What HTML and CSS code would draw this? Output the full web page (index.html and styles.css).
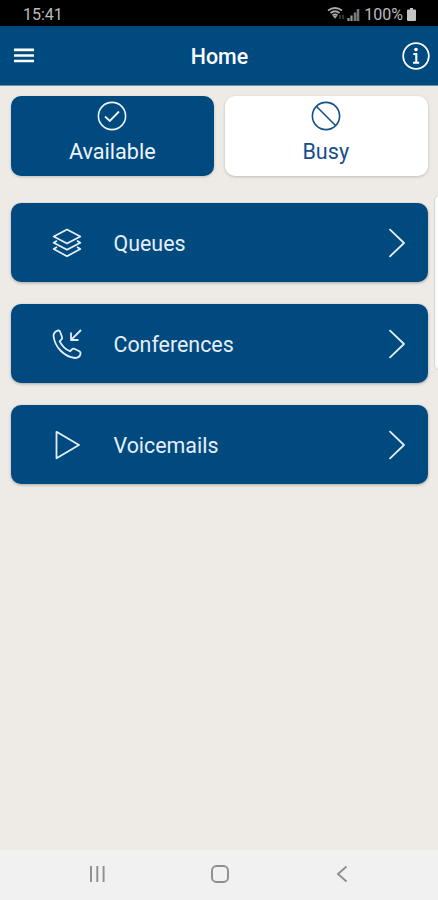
FILE: index.html
```html
<!DOCTYPE html>
<html lang="en">
<head>
    <meta charset="UTF-8">
    <meta name="viewport" content="width=device-width, initial-scale=1.0">
    <title>Home</title>
    <link rel="stylesheet" href="styles.css">
</head>
<body>
<div class="status-bar">
    <span class="time">15:41</span>
    <div class="status-icons">
        <svg class="wifi" width="18" height="14" viewBox="0 0 18 14">
            <path d="M1 3.500Q8-1.500 15 3.500M3.500 6Q8 2.500 12.500 6M5.500 8.300Q8 6.500 10.500 8.300" fill="none" stroke="#aaa" stroke-width="1.800"/>
            <path d="M5.500 8.500L8 11.800L10.500 8.500Z" fill="#aaa"/>
            <path d="M13 8v4M16 8v4" stroke="#444" stroke-width="1.500"/>
        </svg>
        <svg class="signal" width="13" height="13" viewBox="0 0 13 13">
            <path d="M1.500 10v3M4.500 7.500V13" stroke="#999" stroke-width="2.200"/>
            <path d="M8 4.500V13M11 1V13" stroke="#777" stroke-width="2.600"/>
        </svg>
        <span class="percent">100%</span>
        <svg class="battery" width="9" height="13" viewBox="0 0 9 13">
            <path d="M3 0h3v1.500h2q1 0 1 1V12q0 1-1 1H1q-1 0-1-1V2.500q0-1 1-1h2z" fill="#c4c4c4"/>
        </svg>
    </div>
</div>
<header>
    <svg class="menu" width="20" height="15" viewBox="0 0 20 15">
        <path d="M0 1.900h20M0 7.500h20M0 13h20" stroke="#fff" stroke-width="2.700"/>
    </svg>
    <h1>Home</h1>
    <svg class="info" width="28" height="28" viewBox="0 0 28 28" fill="none" stroke="#fff">
        <circle cx="14" cy="14" r="12.800" stroke-width="1.800"/>
        <circle cx="14" cy="7.600" r="1.800" fill="#fff" stroke="none"/>
        <path d="M11.300 12h3v8.600M11 20.800h6.200" stroke-width="2.100"/>
    </svg>
</header>
<main>
    <div class="states">
        <div class="state active">
            <svg width="30" height="30" viewBox="0 0 30 30" fill="none" stroke="currentColor" stroke-width="1.600">
                <circle cx="15" cy="15" r="13.600"/>
                <path d="M8 15.500l4.800 4.500L22 10.500" stroke-width="1.800"/>
            </svg>
            <span>Available</span>
        </div>
        <div class="state busy">
            <svg width="30" height="30" viewBox="0 0 30 30" fill="none" stroke="currentColor" stroke-width="1.600">
                <circle cx="15" cy="15" r="13.600"/>
                <path d="M5.500 5.500l19 19"/>
            </svg>
            <span>Busy</span>
        </div>
    </div>
    <div class="menu-list">
        <div class="item">
            <svg class="icon" width="30" height="30" viewBox="0 0 30 30">
                <path d="M15 1.500L28.300 8.500L15 15.500L1.700 8.500ZM5 12.800L1.700 14.800L15 21.700L28.300 14.800L25 12.800M5 19L1.700 21L15 28.200L28.300 21L25 19"/>
            </svg>
            <span>Queues</span>
            <svg class="arrow" width="18" height="30" viewBox="0 0 18 30"><path d="M1.500 1.200L16 15L1.500 28.800"/></svg>
        </div>
        <div class="item">
            <svg class="icon" width="30" height="30" viewBox="0 0 30 30">
                <path d="M6.300 1.300C3.800 2 1.500 4 1.500 7C3 18.500 12 27.500 23 29C26 29 28.300 27 28.600 24.200C28.600 23.300 28 22.700 27.300 22.300L22.300 19.800C21.300 19.400 20.500 19.700 19.800 20.500L18 22.300C13 20 10 17 7.700 12.300L9.500 10.400C10.200 9.600 10.400 8.900 10 8L8 2.500C7.700 1.600 7.100 1.200 6.300 1.300Z"/>
                <path d="M29 1L19.300 10.700M19 3.500V11H26.500"/>
            </svg>
            <span>Conferences</span>
            <svg class="arrow" width="18" height="30" viewBox="0 0 18 30"><path d="M1.500 1.200L16 15L1.500 28.800"/></svg>
        </div>
        <div class="item">
            <svg class="icon" width="30" height="30" viewBox="0 0 30 30">
                <path d="M4.500 1.800L27 15L4.500 28.200Z"/>
            </svg>
            <span>Voicemails</span>
            <svg class="arrow" width="18" height="30" viewBox="0 0 18 30"><path d="M1.500 1.200L16 15L1.500 28.800"/></svg>
        </div>
    </div>
    <div class="edge-handle"></div>
</main>
<nav>
    <svg width="18" height="18" viewBox="0 0 18 18"><path d="M3 1v16M9.300 1v16M15.600 1v16"/></svg>
    <svg width="18" height="18" viewBox="0 0 18 18"><rect x="1" y="1" width="16" height="16" rx="4.500"/></svg>
    <svg width="18" height="18" viewBox="0 0 18 18"><path d="M13.500 1.500L5 9l8.500 7.500"/></svg>
</nav>
</body>
</html>
```
FILE: styles.css
```css
* {
    box-sizing: border-box;
}
body {
    font-family: Roboto, sans-serif;
    background-color: #eeebe7;
    margin: 0;
    height: 900px;
    display: flex;
    flex-direction: column;
    overflow: hidden;
}
.status-bar {
    background: #000;
    color: #bcbcbc;
    height: 26px;
    padding: 2px 22px 0 23px;
    display: flex;
    align-items: center;
    justify-content: space-between;
    font-size: 16px;
}
.status-icons {
    display: flex;
    align-items: center;
}
.signal {
    margin: 0 4px 0 2px;
}
.battery {
    margin-left: 4px;
}
header {
    background: #004a80;
    color: #fff;
    height: 60px;
    padding: 0 8px 0 14px;
    border-bottom: 1px solid #6f93b2;
    display: grid;
    grid-template-columns: 28px 1fr 28px;
    align-items: center;
}
h1 {
    margin: 2px 0 0 -5px;
    font-size: 21.4px;
    font-weight: 500;
    text-align: center;
}
main {
    position: relative;
    flex: 1;
    padding: 10px 10px 0 11px;
}
.states {
    display: flex;
    gap: 11px;
}
.state {
    flex: 1;
    height: 80px;
    padding-top: 5px;
    border-radius: 10px;
    background: #fff;
    color: #14508a;
    display: flex;
    flex-direction: column;
    align-items: center;
    font-size: 21.6px;
    line-height: 30px;
    box-shadow: 0 1px 3px rgba(0, 0, 0, 0.2);
}
.state span {
    margin-top: 6px;
}
.active {
    background: #004a80;
    color: #eef4fb;
}
.busy {
    padding-right: 1px;
}
.menu-list {
    margin-top: 27px;
    display: flex;
    flex-direction: column;
    gap: 22px;
}
.item {
    height: 79px;
    padding: 0 22px 0 41px;
    border-radius: 10px;
    background: #004a80;
    color: #e6eef8;
    display: flex;
    align-items: center;
    font-size: 21.4px;
    box-shadow: 0 1px 3px rgba(0, 0, 0, 0.3);
}
.item span {
    flex: 1;
    margin: 2px 0 0 31.5px;
}
.icon, .arrow {
    fill: none;
    stroke: #e6eef8;
    stroke-width: 1.8;
    stroke-linejoin: round;
}
/* edge panel handle of the phone */
.edge-handle {
    position: absolute;
    top: 109px;
    right: -8px;
    width: 12px;
    height: 175px;
    border: 1px solid #d8d6d3;
    border-radius: 5px;
    background: #fbfbfa;
}
nav {
    height: 50px;
    padding: 0 87px 2px 88px;
    background: #f1f1f1;
    display: flex;
    align-items: center;
    justify-content: space-between;
}
nav svg {
    fill: none;
    stroke: #8e8e8e;
    stroke-width: 1.9;
}
```
